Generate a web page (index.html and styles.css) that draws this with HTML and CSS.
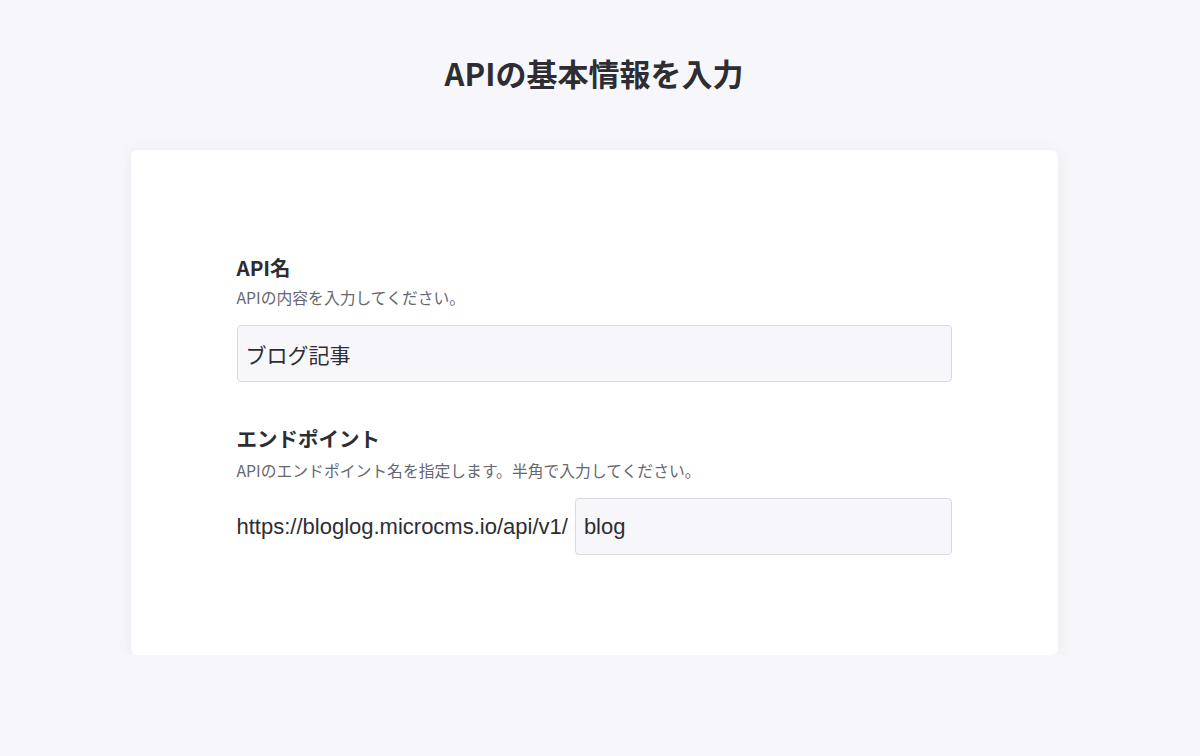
FILE: index.html
```html
<!DOCTYPE html>
<html lang="ja">
<head>
<meta charset="utf-8">
<link rel="stylesheet" href="styles.css">
</head>
<body>
<div class="page">
  <h1 class="title">APIの基本情報を入力</h1>
  <div class="card">
    <div class="field">
      <div class="label">API名</div>
      <div class="desc">APIの内容を入力してください。</div>
      <div class="input full">ブログ記事</div>
    </div>
    <div class="field second">
      <div class="label">エンドポイント</div>
      <div class="desc">APIのエンドポイント名を指定します。半角で入力してください。</div>
      <div class="row">
        <span class="prefix">https://bloglog.microcms.io/api/v1/</span>
        <div class="input grow">blog</div>
      </div>
    </div>
  </div>
</div>
</body>
</html>
```
FILE: styles.css
```css
html, body {
  margin: 0;
  padding: 0;
  background: #f7f7fb;
  font-family: "Noto Sans CJK JP", "Noto Sans", sans-serif;
  color: #2c2c30;
}
.page {
  display: flex;
  flex-direction: column;
  align-items: center;
  padding-top: 52px;
  padding-right: 12px;
}
.title {
  margin: 0;
  font-size: 31px;
  line-height: 42px;
  font-weight: 700;
  color: #2d2d33;
}
.card {
  margin-top: 56px;
  width: 927px;
  box-sizing: border-box;
  background: #fff;
  border-radius: 6px;
  box-shadow: 0 2px 16px rgba(40, 40, 90, 0.08);
  padding: 104px 106px 100px;
}
.field.second {
  margin-top: 43px;
}
.label {
  font-size: 20.5px;
  line-height: 26px;
  font-weight: 700;
  color: #2d2d33;
}
.desc {
  margin-top: 8px;
  font-size: 15.8px;
  line-height: 20px;
  color: #67676e;
}
.second .desc {
  margin-top: 10px;
}
.input {
  margin-top: 17px;
  box-sizing: border-box;
  height: 57px;
  background: #f7f7fb;
  border: 1px solid #d9d9de;
  border-radius: 4px;
  padding: 0 8px;
  display: flex;
  align-items: center;
  font-size: 21px;
  color: #2d2d33;
}
.row {
  margin-top: 17px;
  display: flex;
  align-items: center;
  gap: 7px;
}
.row .input {
  margin-top: 0;
}
.prefix {
  font-family: "Liberation Sans", "Noto Sans CJK JP", sans-serif;
  font-size: 22px;
  color: #2d2d33;
  white-space: nowrap;
}
.grow {
  flex: 1;
  font-family: "Liberation Sans", "Noto Sans CJK JP", sans-serif;
  font-size: 22px;
}
```
